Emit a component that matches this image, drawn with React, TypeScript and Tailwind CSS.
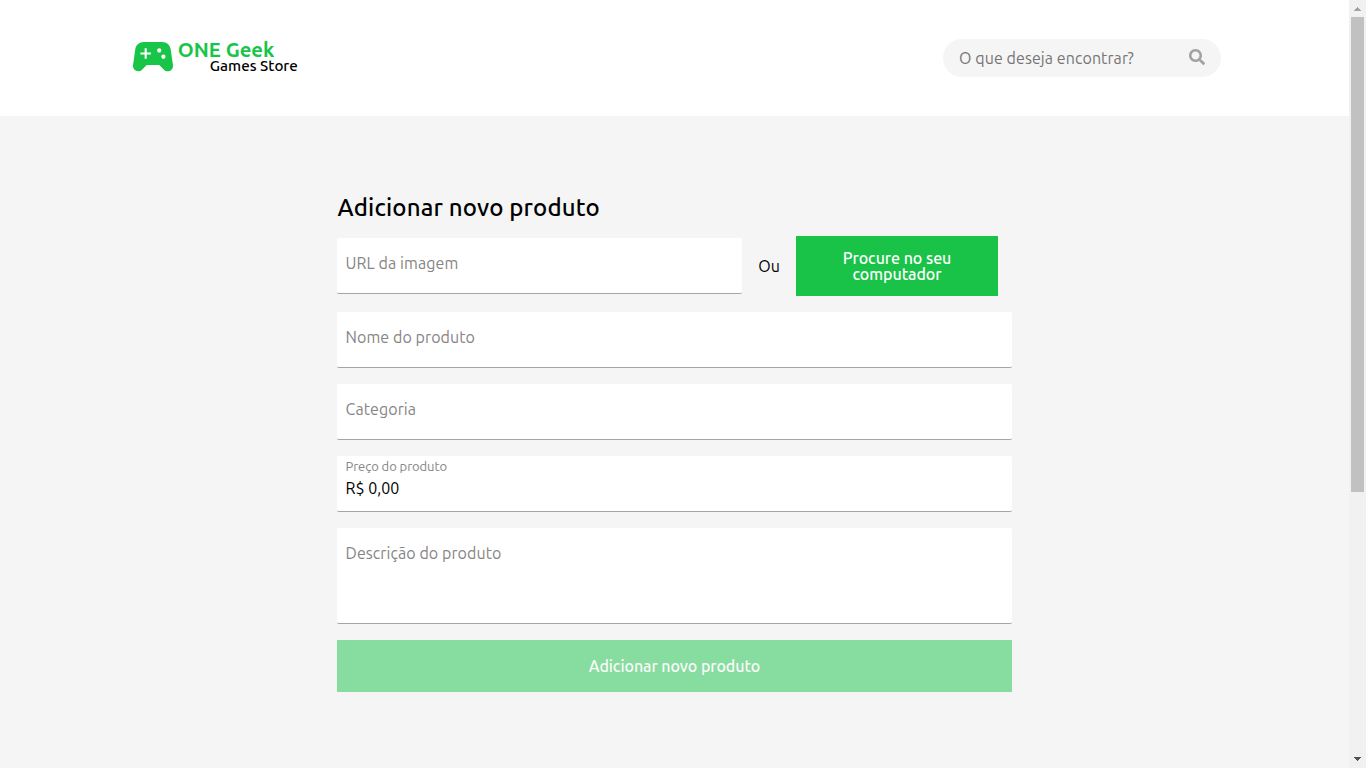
import { FaSearch } from "react-icons/fa";

function Logo() {
  return (
    <svg width="170" height="48" viewBox="0 -6 170 48" className="block">
      <g fill="#19c549" transform="translate(-5.05 -8.4) scale(2.087)">
        <path d="M21.58 16.09l-1.09-7.66A3.996 3.996 0 0 0 16.53 5H7.47C5.48 5 3.79 6.46 3.51 8.43l-1.09 7.66A2.545 2.545 0 0 0 4.94 19c.68 0 1.32-.27 1.8-.75L9 16h6l2.25 2.25c.48.48 1.13.75 1.8.75 1.56 0 2.75-1.37 2.53-2.91zM11 11H9v2H8v-2H6v-1h2V8h1v2h2v1zm4-1c-.55 0-1-.45-1-1s.45-1 1-1 1 .45 1 1-.45 1-1 1zm2 3c-.55 0-1-.45-1-1s.45-1 1-1 1 .45 1 1-.45 1-1 1z" />
      </g>
      <text x="44.8" y="17" fill="#19c549" fontSize="20" fontWeight="700" textLength="96.5" lengthAdjust="spacingAndGlyphs">ONE Geek</text>
      <text x="76.8" y="31" fill="#000" fontSize="15" fontWeight="500" textLength="88" lengthAdjust="spacingAndGlyphs">Games Store</text>
    </svg>
  );
}

function Field({ label, value, className = "h-14 w-full" }: { label: string; value?: string; className?: string }) {
  return (
    <div className={`rounded-[2px] border-b border-[#a2a6a6] bg-white px-[8.5px] ${className}`}>
      {value ? (
        <>
          <div className="pt-px text-[13px] leading-[18px] tracking-[-0.06px] text-[#858585]">{label}</div>
          <div className="pt-px text-[16px] leading-6 text-black">{value}</div>
        </>
      ) : (
        <div className="pt-[13px] text-[16px] leading-6 tracking-[0.08px] text-[#858585]">{label}</div>
      )}
    </div>
  );
}

function Scrollbar() {
  return (
    <div className="flex h-full w-[17px] shrink-0 flex-col items-center bg-[#f1f1f1]">
      <svg width="17" height="17" viewBox="0 0 17 17" shapeRendering="crispEdges">
        <path d="M8 7h1v1h1v1h1v1h1v1H5v-1h1V9h1V8h1z" fill="#a3a3a3" />
      </svg>
      <div className="h-[475px] w-[13px] bg-[#c1c1c1]" />
      <svg width="17" height="17" viewBox="0 0 17 17" className="mt-auto" shapeRendering="crispEdges">
        <path d="M5 6h7v1h-1v1h-1v1H9v1H8V9H7V8H6V7H5z" fill="#505050" />
      </svg>
    </div>
  );
}

export default function App() {
  return (
    <div className="flex h-[768px] w-[1366px] overflow-hidden bg-[#f5f5f5] font-['Ubuntu','Noto_Sans',sans-serif] text-black">
      <div className="flex-1">
        <header className="flex h-[116px] items-center justify-between bg-white pr-32 pl-[133px]">
          <Logo />
          <div className="flex h-[38px] w-[278px] items-center justify-between rounded-full bg-[#f5f5f5] px-4">
            <span className="text-[16px] leading-6 tracking-[0.08px] whitespace-nowrap text-[#757575]">O que deseja encontrar?</span>
            <FaSearch className="-mt-0.5 size-4 text-[#a2a2a2]" />
          </div>
        </header>
        <main className="mx-auto flex w-[675px] flex-col pt-[74px]">
          <h1 className="mb-2.5 h-9 pl-[0.5px] text-[24px] leading-9 font-medium tracking-[0.15px] whitespace-nowrap">Adicionar novo produto</h1>
          <div className="mb-4 flex h-[60px] items-center">
            <Field label="URL da imagem" className="h-14 w-[405px]" />
            <span className="w-[54px] text-center text-[16px] leading-6">Ou</span>
            <button className="h-[60px] w-[202px] bg-[#19c347] px-10 text-[16px] leading-4 font-medium tracking-[-0.04px] text-white">Procure no seu computador</button>
          </div>
          <div className="flex flex-col gap-4">
            <Field label="Nome do produto" />
            <Field label="Categoria" />
            <Field label="Preço do produto" value="R$ 0,00" />
            <Field label="Descrição do produto" className="h-24 w-full" />
            <button className="h-[52px] w-full bg-[#87dd9f] text-[16px] leading-4 font-medium tracking-[-0.06px] text-[#fafafa]">Adicionar novo produto</button>
          </div>
        </main>
      </div>
      <Scrollbar />
    </div>
  );
}
